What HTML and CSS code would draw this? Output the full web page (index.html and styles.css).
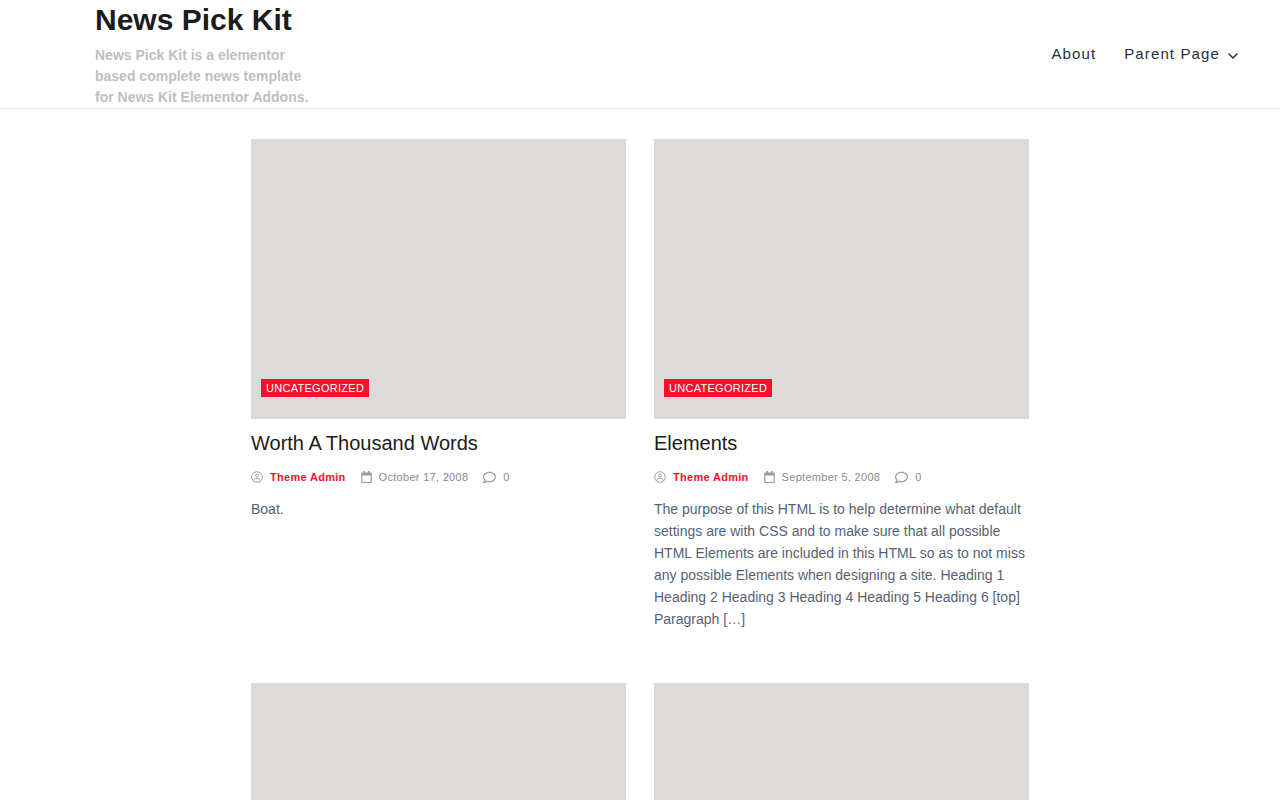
FILE: index.html
```html
<!DOCTYPE html>
<html lang="en">
<head>
<meta charset="utf-8">
<meta name="viewport" content="width=device-width, initial-scale=1">
<title>News Pick Kit</title>
<link rel="stylesheet" href="styles.css">
</head>
<body>
<svg class="sprite" aria-hidden="true">
  <symbol id="user" viewBox="0 0 26 26"><g fill="none" stroke="currentColor" stroke-width="2"><circle cx="13" cy="13" r="11.500"/><circle cx="13" cy="10" r="3.200"/><path d="M5.500 21c1-3.600 3.800-5 7.500-5s6.500 1.400 7.500 5"/></g></symbol>
  <symbol id="calendar" viewBox="0 0 448 512"><path d="M400 64h-48V12c0-6.600-5.400-12-12-12h-40c-6.600 0-12 5.400-12 12v52H160V12c0-6.600-5.400-12-12-12h-40c-6.600 0-12 5.400-12 12v52H48C21.500 64 0 85.500 0 112v352c0 26.500 21.500 48 48 48h352c26.500 0 48-21.500 48-48V112c0-26.500-21.500-48-48-48zm-6 400H54c-3.300 0-6-2.700-6-6V192h352v266c0 3.300-2.700 6-6 6z"/></symbol>
  <symbol id="comment" viewBox="0 0 512 512"><path d="M256 32C114.600 32 0 125.100 0 240c0 47.600 19.900 91.200 52.900 126.300C38 405.700 7 439.100 6.500 439.500c-6.600 7-8.400 17.200-4.600 26S14.400 480 24 480c61.500 0 110-25.700 139.100-46.300C192 442.800 223.200 448 256 448c141.400 0 256-93.100 256-208S397.400 32 256 32zm0 368c-26.700 0-53.100-4.100-78.400-12.100l-22.700-7.200-19.500 13.800c-14.300 10.100-33.900 21.400-57.500 29 7.300-12.100 14.400-25.700 19.900-40.200l10.600-28.100-20.600-21.800C69.700 314.100 48 282.200 48 240c0-88.200 93.300-160 208-160s208 71.800 208 160-93.300 160-208 160z"/></symbol>
</svg>

<header class="site-header">
  <div class="branding">
    <h1 class="site-title"><a href="#">News Pick Kit</a></h1>
    <p class="tagline">News Pick Kit is a elementor based complete news template for News Kit Elementor Addons.</p>
  </div>
  <nav class="main-nav" aria-label="Primary">
    <a href="#">About</a>
    <a href="#">Parent Page
      <svg class="chevron" viewBox="0 0 10 6" aria-hidden="true"><path d="M1 1l4 4 4-4"/></svg>
    </a>
  </nav>
</header>

<main class="posts">
  <article class="post">
    <div class="thumb"><a class="category" href="#">UNCATEGORIZED</a></div>
    <h2 class="post-title"><a href="#">Worth A Thousand Words</a></h2>
    <div class="meta">
      <a class="meta-item author" href="#"><svg class="icon" aria-hidden="true"><use href="#user"/></svg>Theme Admin</a>
      <span class="meta-item"><svg class="icon date-icon" aria-hidden="true"><use href="#calendar"/></svg><time datetime="2008-10-17">October 17, 2008</time></span>
      <span class="meta-item"><svg class="icon comment-icon" aria-hidden="true"><use href="#comment"/></svg>0</span>
    </div>
    <p class="excerpt">Boat.</p>
  </article>
  <article class="post">
    <div class="thumb"><a class="category" href="#">UNCATEGORIZED</a></div>
    <h2 class="post-title"><a href="#">Elements</a></h2>
    <div class="meta">
      <a class="meta-item author" href="#"><svg class="icon" aria-hidden="true"><use href="#user"/></svg>Theme Admin</a>
      <span class="meta-item"><svg class="icon date-icon" aria-hidden="true"><use href="#calendar"/></svg><time datetime="2008-09-05">September 5, 2008</time></span>
      <span class="meta-item"><svg class="icon comment-icon" aria-hidden="true"><use href="#comment"/></svg>0</span>
    </div>
    <p class="excerpt">The purpose of this HTML is to help determine what default settings are with CSS and to make sure that all possible HTML Elements are included in this HTML so as to not miss any possible Elements when designing a site. Heading 1 Heading 2 Heading 3 Heading 4 Heading 5 Heading 6 [top] Paragraph […]</p>
  </article>
  <article class="post"><div class="thumb"></div></article>
  <article class="post"><div class="thumb"></div></article>
</main>
</body>
</html>
```
FILE: styles.css
```css
* {
  box-sizing: border-box;
}

html {
  scrollbar-width: none;
}

body {
  margin: 0;
  background: #fff;
  color: #1c1c1c;
  font-family: "Liberation Sans", Arial, sans-serif;
}

h1, h2, p {
  margin: 0;
}

a {
  color: inherit;
  text-decoration: none;
}

.sprite {
  display: none;
}

.site-header {
  display: flex;
  align-items: center;
  justify-content: space-between;
  padding: 0 42px 0 95px;
  border-bottom: 1px solid #ebebeb;
}

.branding {
  max-width: 225px;
}

.site-title {
  margin-bottom: 5px;
  font-size: 30px;
  line-height: 40px;
}

.tagline {
  color: #c0c0c0;
  font-size: 14px;
  font-weight: 700;
  line-height: 21px;
}

.main-nav {
  display: flex;
  gap: 28px;
  color: #24303f;
  font-size: 15px;
  line-height: 22px;
  letter-spacing: 0.075em;
}

.main-nav a {
  display: flex;
  align-items: center;
  gap: 8px;
}

.chevron {
  width: 10px;
  height: 6px;
  margin-top: 4px;
  fill: none;
  stroke: currentColor;
  stroke-width: 1.5;
  stroke-linecap: round;
  stroke-linejoin: round;
}

.posts {
  display: grid;
  grid-template-columns: repeat(2, minmax(0, 1fr));
  gap: 53px 28px;
  max-width: 778px;
  margin: 30px auto;
}

.thumb {
  display: flex;
  align-items: flex-end;
  height: 280px;
  padding: 22px 10px;
  background: #dcdbd9;
}

.category {
  padding: 0 5px;
  background: #fa0f2b;
  color: #fff;
  font-size: 11px;
  line-height: 18px;
  letter-spacing: 0.025em;
}

.post-title {
  margin-top: 10px;
  font-size: 20px;
  font-weight: 400;
  line-height: 28px;
}

.meta {
  display: flex;
  gap: 15px;
  margin-top: 11px;
  color: #8a8a8a;
  font-size: 11px;
  line-height: 18px;
  letter-spacing: 0.027em;
}

.meta-item {
  display: flex;
  align-items: center;
  gap: 7px;
}

.author {
  color: #fa0f2b;
  font-weight: 700;
}

.icon {
  width: 12px;
  height: 12px;
  color: #999;
  fill: currentColor;
}

.date-icon {
  width: 11px;
}

.comment-icon {
  width: 13px;
  height: 13px;
}

.excerpt {
  margin-top: 12px;
  color: #556275;
  font-size: 14px;
  line-height: 22px;
}
```
